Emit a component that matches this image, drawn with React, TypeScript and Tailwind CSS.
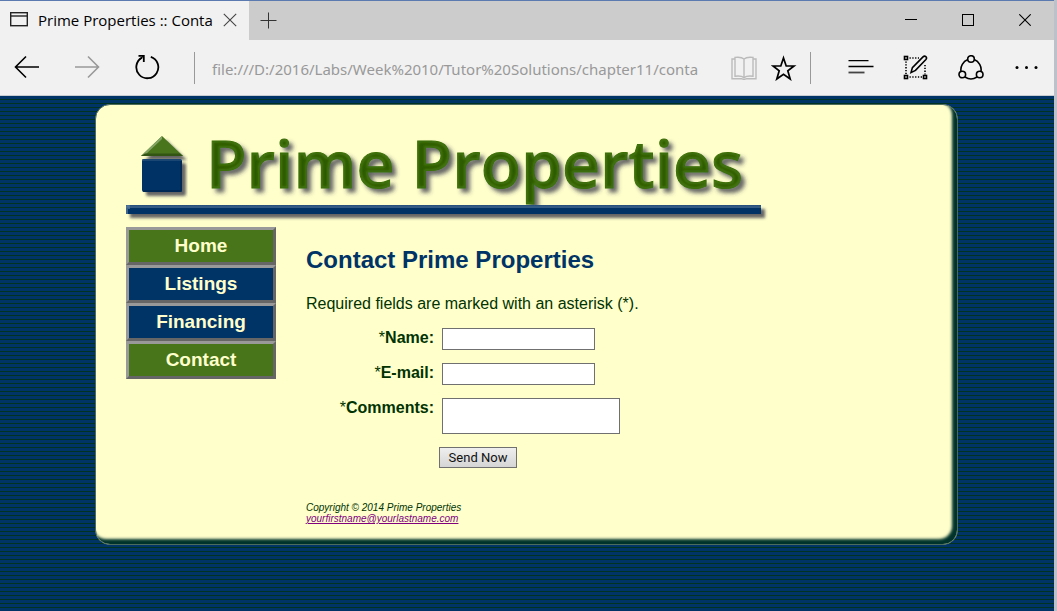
import React from "react";

const toolButton = "flex h-9 w-9 shrink-0 items-center justify-center";

function TabStrip() {
  return (
    <div className="flex h-10 items-stretch border-t border-[#5b7bb0] bg-[#cccccc] text-black">
      <div className="flex w-[249px] shrink-0 items-center bg-[#f1f1f1] pl-2.5">
        <svg width="18" height="16" viewBox="0 0 18 16" fill="none" stroke="#222" strokeWidth="1.4" aria-hidden="true" className="-mt-1">
          <rect x="0.7" y="1.7" width="16.6" height="13" />
          <path d="M0.6 5H17.4" />
        </svg>
        <span className="ml-2.5 w-[172px] pb-0.5 whitespace-nowrap text-[15px] leading-5">
          Prime Properties :: Conta
        </span>
        <button type="button" aria-label="Close tab" className="ml-2.5 flex h-5 w-5 items-center justify-center pb-0.5">
          <svg width="14" height="14" viewBox="0 0 14 14" stroke="#444" strokeWidth="1.1" aria-hidden="true">
            <path d="M0.8 0.8L13.2 13.2M13.2 0.8L0.8 13.2" />
          </svg>
        </button>
      </div>
      <button type="button" aria-label="New tab" className="flex w-10 items-center justify-center pr-0.5">
        <svg width="17" height="17" viewBox="0 0 17 17" stroke="#333" aria-hidden="true">
          <path d="M8.5 0.5V16.5M0.5 8.5H16.5" />
        </svg>
      </button>
      <div className="ml-auto flex pr-px pb-px">
        <button type="button" aria-label="Minimize" className="flex w-[57px] items-center justify-center">
          <svg width="12" height="12" viewBox="0 0 12 12" stroke="#000" aria-hidden="true">
            <path d="M0 5.5H12" />
          </svg>
        </button>
        <button type="button" aria-label="Maximize" className="flex w-[57px] items-center justify-center">
          <svg width="12" height="12" viewBox="0 0 12 12" fill="none" stroke="#000" aria-hidden="true">
            <rect x="0.5" y="0.5" width="11" height="11" />
          </svg>
        </button>
        <button type="button" aria-label="Close" className="flex w-[57px] items-center justify-center">
          <svg width="12" height="12" viewBox="0 0 12 12" stroke="#000" strokeWidth="1.1" aria-hidden="true">
            <path d="M0.3 0.3L11.7 11.7M11.7 0.3L0.3 11.7" />
          </svg>
        </button>
      </div>
    </div>
  );
}

function Toolbar() {
  return (
    <div className="flex h-14 items-center border-b border-[#c8ccd0] bg-[#f1f1f1] text-black">
      <div className="flex shrink-0 items-center gap-6 pb-px pl-[9px]">
        <button type="button" aria-label="Back" className={toolButton}>
          <svg width="26" height="24" viewBox="0 0 26 24" fill="none" stroke="#000" strokeWidth="1.6" aria-hidden="true">
            <path d="M25 12H1.6M12 1.5L1.5 12L12 22.5" />
          </svg>
        </button>
        <button type="button" aria-label="Forward" className={toolButton}>
          <svg width="26" height="24" viewBox="0 0 26 24" fill="none" stroke="#999" strokeWidth="1.6" aria-hidden="true">
            <path d="M1 12H24.4M14 1.5L24.5 12L14 22.5" />
          </svg>
        </button>
        <button type="button" aria-label="Refresh" className={toolButton}>
          <svg width="26" height="26" viewBox="0 0 26 26" fill="none" stroke="#000" strokeWidth="1.8" aria-hidden="true">
            <path d="M16.8 2.8A11 11 0 1 1 8 3.6" />
            <path d="M4.5 1.9H9.8V8" />
            <path d="M9.6 1.9L5.6 5.6" strokeWidth="1.2" />
          </svg>
        </button>
      </div>
      <div className="ml-[29px] h-8 w-px shrink-0 bg-[#999]" />
      <input
        type="text"
        aria-label="Address"
        readOnly
        value="file:///D:/2016/Labs/Week%2010/Tutor%20Solutions/chapter11/conta"
        className="ml-[17px] min-w-0 flex-1 bg-transparent pt-1 font-['Noto_Sans',sans-serif] text-[15px] text-[#999] outline-none"
      />
      <div className="flex shrink-0 items-center pl-[17px]">
        <button type="button" aria-label="Reading view" className={toolButton}>
          <svg width="26" height="24" viewBox="0 0 26 24" fill="none" stroke="#bbb" strokeWidth="1.4" aria-hidden="true">
            <path d="M13 3C11 1.2 7 1 4 1.4V20.2C7 19.8 11 20 13 21.6C15 20 19 19.8 22 20.2V1.4C19 1 15 1.2 13 3V21.6" />
            <path d="M4 3H1V22.8H10.6C11.6 22.8 12 23.3 13 23.3S14.4 22.8 15.4 22.8H25V3H22" />
          </svg>
        </button>
        <button type="button" aria-label="Add to favorites" className={toolButton + " ml-1"}>
          <svg width="26" height="26" viewBox="0 0 26 26" fill="none" stroke="#000" strokeWidth="1.7" aria-hidden="true">
            <path d="M12.5 3L15.2 11H23L16.8 15.8L19.2 24L12.5 19.2L5.8 24L8.2 15.8L2 11H9.8Z" />
          </svg>
        </button>
      </div>
      <div className="ml-2 h-8 w-px shrink-0 bg-[#999]" />
      <div className="flex shrink-0 items-center gap-[19px] pl-8 pr-2.5">
        <button type="button" aria-label="Hub" className={toolButton}>
          <svg width="26" height="16" viewBox="0 0 26 16" fill="none" aria-hidden="true">
            <path d="M0.5 0.5H20.5M0.5 6.5H25.5" stroke="#000" strokeWidth="1.6" />
            <path d="M0.5 12.5H16.5" stroke="#444" strokeWidth="1.8" />
          </svg>
        </button>
        <button type="button" aria-label="Make a web note" className={toolButton}>
          <svg width="26" height="26" viewBox="0 0 26 26" fill="none" stroke="#000" strokeWidth="1.6" aria-hidden="true">
            <rect x="1.5" y="1.5" width="3" height="3" />
            <rect x="1.5" y="20.5" width="3" height="3" />
            <rect x="20.5" y="20.5" width="3" height="3" />
            <path d="M6.5 3H16M3 6.5V19.5M22 10V19.5M6.5 22H19.5" strokeDasharray="1.3 1.5" />
            <path d="M8 17.6L9.4 12.6L20 1.9C22 0 24.6 2.4 22.9 4.5L12.5 15.4Z" />
          </svg>
        </button>
        <button type="button" aria-label="Share" className={toolButton}>
          <svg width="26" height="26" viewBox="0 0 26 26" fill="none" stroke="#000" strokeWidth="1.6" aria-hidden="true">
            <circle cx="13" cy="4" r="3.3" />
            <circle cx="4.3" cy="19.5" r="3.3" />
            <circle cx="21.7" cy="19.500" r="3.3" />
            <path d="M9.8 4.600A10.8 10.8 0 0 0 3 16.4M16.2 4.6A10.8 10.8 0 0 1 23 16.4M7 22A10.8 10.8 0 0 0 19 22" />
          </svg>
        </button>
        <button type="button" aria-label="More" className={toolButton}>
          <svg width="24" height="4" viewBox="0 0 24 4" fill="#000" aria-hidden="true">
            <circle cx="3" cy="1.500" r="1.5" />
            <circle cx="12.5" cy="1.5" r="1.5" />
            <circle cx="22" cy="1.5" r="1.5" />
          </svg>
        </button>
      </div>
    </div>
  );
}

function Logo() {
  return (
    <h1>
      <svg width="645" height="90" viewBox="0 0 645 90" className="block max-w-full overflow-visible">
        <defs>
          <linearGradient id="bar" x1="0" y1="0" x2="0" y2="1">
            <stop offset="0" stopColor="#1c4677" />
            <stop offset="0.1" stopColor="#335a82" />
            <stop offset="0.3" stopColor="#335a82" />
            <stop offset="0.36" stopColor="#003366" />
            <stop offset="1" stopColor="#003366" />
          </linearGradient>
          <filter id="shadow" x="-10%" y="-60%" width="120%" height="260%">
            <feDropShadow dx="4" dy="4" stdDeviation="1.6" floodColor="#333344" floodOpacity="0.75" />
          </filter>
          <filter id="bevel" x="-5%" y="-10%" width="110%" height="130%">
            <feMorphology in="SourceAlpha" operator="erode" radius="2" result="core" />
            <feGaussianBlur in="core" stdDeviation="1" result="soft" />
            <feFlood floodColor="#2d5a00" />
            <feComposite in2="soft" operator="in" result="dark" />
            <feGaussianBlur in="SourceAlpha" stdDeviation="2" />
            <feOffset dx="4" dy="4" result="blur" />
            <feFlood floodColor="#333344" floodOpacity="0.75" />
            <feComposite in2="blur" operator="in" result="drop" />
            <feMerge>
              <feMergeNode in="drop" />
              <feMergeNode in="SourceGraphic" />
              <feMergeNode in="dark" />
            </feMerge>
          </filter>
        </defs>
        <g filter="url(#shadow)">
          <path d="M36 7L57 27H15Z" fill="#48751a" />
          <rect x="16" y="30" width="40" height="33" rx="2" fill="#003366" />
        </g>
        <path d="M36 7L15 27L20 25L36 10Z" fill="#84a465" />
        <path d="M15 27H57L54 24.5H19Z" fill="#335514" />
        <path d="M17 32V31H55" fill="none" stroke="#234e7a" strokeWidth="1.5" />
        <path d="M17 62H55V32" fill="none" stroke="#002850" strokeWidth="1.5" />
        <text
          x="80"
          y="59"
          fontSize="66"
          fontWeight="600"
          fill="#447519"
          stroke="#3f7012"
          strokeWidth="1"
          filter="url(#bevel)"
          className="font-['Open_Sans',sans-serif]"
        >
          Prime Properties
        </text>
        <g filter="url(#shadow)">
          <rect x="0" y="76" width="635" height="9" fill="url(#bar)" />
        </g>
        <path d="M1 85V77H3V80" fill="none" stroke="#557799" strokeWidth="1.5" />
      </svg>
    </h1>
  );
}

const links = [
  { label: "Home", color: "bg-[#48751a]" },
  { label: "Listings", color: "bg-[#003366]" },
  { label: "Financing", color: "bg-[#003366]" },
  { label: "Contact", color: "bg-[#48751a]" },
];

function Nav() {
  return (
    <nav className="w-[150px] shrink-0">
      {links.map((link) => (
        <a
          key={link.label}
          href="#"
          className={
            "block h-[38px] border-[3px] border-t-[#999] border-r-[#666] border-b-[#666] border-l-[#999] text-center text-[19px] leading-8 font-bold text-[#ffffcc] " +
            link.color
          }
        >
          {link.label}
        </a>
      ))}
    </nav>
  );
}

const field = "block border border-[#707070] bg-white px-1 text-[13px] text-black";
const label = "text-right leading-5 font-bold";

function ContactForm() {
  return (
    <form onSubmit={(e) => e.preventDefault()}>
      <div className="grid grid-cols-[128px_1fr] gap-x-2 gap-y-[13px]">
        <label htmlFor="name" className={label}>
          <span className="font-normal">*</span>Name:
        </label>
        <input id="name" type="text" required className={field + " h-[22px] w-[153px]"} />
        <label htmlFor="email" className={label}>
          <span className="font-normal">*</span>E-mail:
        </label>
        <input id="email" type="email" required className={field + " h-[22px] w-[153px]"} />
        <label htmlFor="comments" className={label}>
          <span className="font-normal">*</span>Comments:
        </label>
        <textarea id="comments" required rows={2} className={field + " h-9 w-[178px] resize-none"} />
      </div>
      <button
        type="submit"
        className="mt-[13px] ml-[133px] block h-[21px] w-[78px] border border-[#707070] bg-linear-to-b from-[#efefef] to-[#d5d5d5] text-center font-[Roboto,sans-serif] text-[13px] leading-[19px] text-[#111]"
      >
        Send Now
      </button>
    </form>
  );
}

export default function App() {
  return (
    <div className="flex min-h-screen flex-col border-r-[3px] border-[#bcc1ca] font-['Open_Sans',sans-serif]">
      <header>
        <TabStrip />
        <Toolbar />
      </header>
      <div className="flex-1 bg-[repeating-linear-gradient(to_bottom,#003366_0px,#003366_3px,#003322_3px,#003322_4px)] pt-2 pr-[17px] pb-16 pl-4 font-['Liberation_Sans',Arial,sans-serif]">
        <div className="mx-auto w-full max-w-[863px] rounded-[15px] border border-[#4d6b5c] bg-[#ffffcc] px-[30px] pt-6 pb-5 text-[#003300] shadow-[inset_-4px_-4px_3px_1px_#00332b]">
          <Logo />
          <div className="mt-2 flex">
            <Nav />
            <main className="min-w-0 flex-1 pl-[30px]">
              <h2 className="mt-[17px] text-2xl leading-8 font-bold text-[#003366]">Contact Prime Properties</h2>
              <p className="mt-4 mb-3 text-base leading-6">Required fields are marked with an asterisk (*).</p>
              <ContactForm />
              <footer className="mt-[34px] text-[10px] leading-[11px] italic">
                Copyright © 2014 Prime Properties
                <br />
                <a href="mailto:yourfirstname@yourlastname.com" className="text-[#800080] underline">
                  yourfirstname@yourlastname.com
                </a>
              </footer>
            </main>
          </div>
        </div>
      </div>
    </div>
  );
}
